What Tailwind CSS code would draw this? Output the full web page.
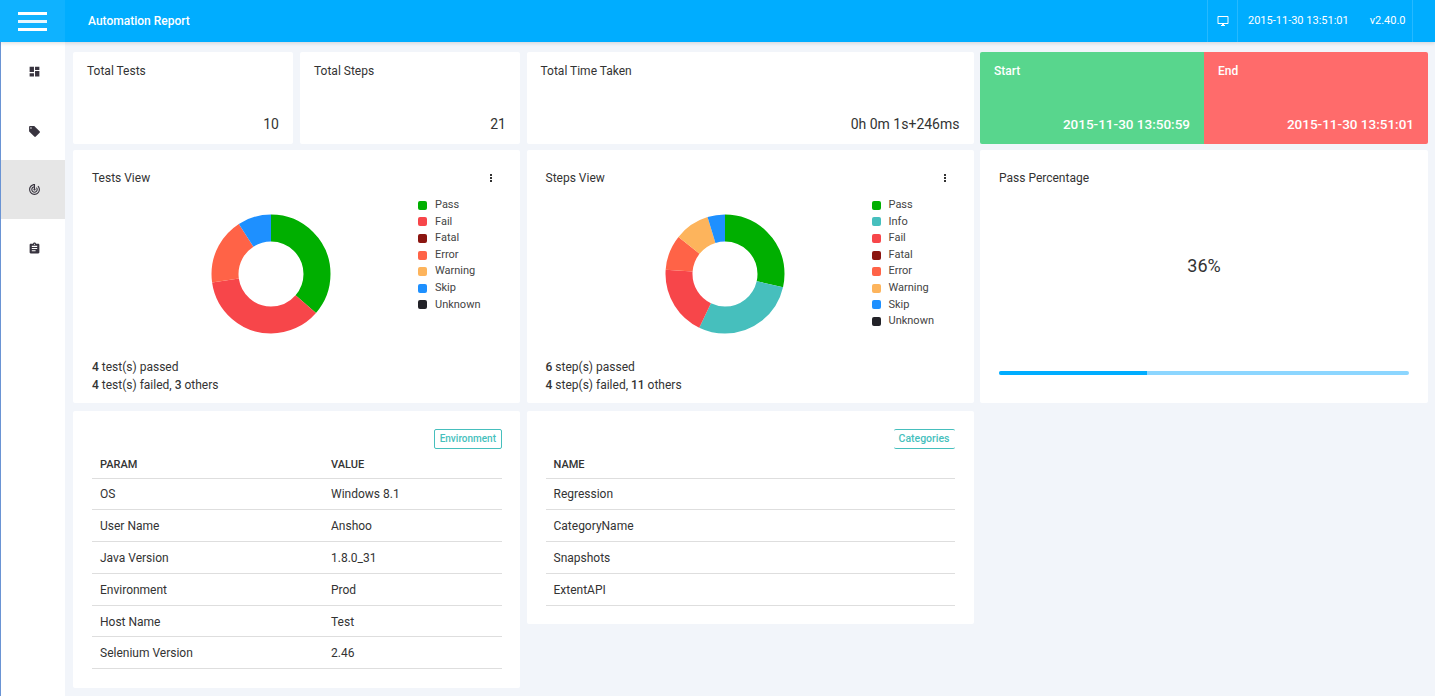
<!DOCTYPE html>
<html lang="en">
<head>
<meta charset="utf-8">
<title>Automation Report</title>
<script src="https://cdn.jsdelivr.net/npm/@tailwindcss/browser@4"></script>
</head>
<body class="h-[696px] overflow-hidden bg-[#f2f5fa] font-['Roboto',sans-serif] text-xs text-[#333]">
<header class="relative z-10 flex h-[42px] items-center bg-[#00adff] text-white shadow-[0_1px_4px_rgba(0,0,0,0.15)]">
  <div class="flex h-full w-[65px] flex-col items-center justify-center gap-[5px] bg-[#0fb2ff]">
    <span class="h-[3px] w-[29px] bg-white"></span>
    <span class="h-[3px] w-[29px] bg-white/90"></span>
    <span class="h-[3px] w-[29px] bg-white"></span>
  </div>
  <div class="ml-[23px] font-medium">Automation Report</div>
  <div class="ml-auto mr-[22px] flex h-full items-center">
    <div class="flex h-full w-[30px] items-center justify-center border-l border-white/15">
      <svg class="h-3 w-3 fill-white" viewBox="0 0 24 24"><path d="M21 2H3c-1.1 0-2 .9-2 2v12c0 1.1.9 2 2 2h7v2H8v2h8v-2h-2v-2h7c1.1 0 2-.9 2-2V4c0-1.1-.9-2-2-2zm0 14H3V4h18v12z"/></svg>
    </div>
    <div class="flex h-full w-[176px] items-center gap-[21px] border-x border-white/15 pl-[10px] text-[11px]">
      <span>2015-11-30 13:51:01</span>
      <span>v2.40.0</span>
    </div>
  </div>
</header>
<div class="flex h-[654px]">
  <nav class="h-full w-[65px] shrink-0 border-l border-[#6a94d4] bg-white">
    <div class="flex h-[59px] items-center justify-center pl-[3px]">
      <svg class="h-[13px] w-[13px] fill-[#38343f]" viewBox="0 0 24 24"><path d="M3 13h8V3H3v10zm0 8h8v-6H3v6zm10 0h8V11h-8v10zm0-18v6h8V3h-8z"/></svg>
    </div>
    <div class="flex h-[59px] items-center justify-center pl-[3px] pt-[1px]">
      <svg class="h-[13px] w-[13px] fill-[#38343f]" viewBox="0 0 24 24"><path d="M21.41 11.58l-9-9C12.05 2.22 11.55 2 11 2H4c-1.1 0-2 .9-2 2v7c0 .55.22 1.05.59 1.42l9 9c.36.36.86.58 1.41.58.55 0 1.05-.22 1.41-.59l7-7c.37-.36.59-.86.59-1.41 0-.55-.23-1.06-.59-1.42zM5.5 7C4.67 7 4 6.33 4 5.5S4.67 4 5.5 4 7 4.67 7 5.5 6.33 7 5.5 7z"/></svg>
    </div>
    <div class="flex h-[59px] items-center justify-center bg-[#e6e6e6] pl-[3px]">
      <svg class="h-[13px] w-[13px] fill-[#38343f]" viewBox="0 0 24 24"><path d="M19.07 4.93l-1.41 1.41C19.1 7.79 20 9.79 20 12c0 4.42-3.58 8-8 8s-8-3.58-8-8c0-4.08 3.05-7.44 7-7.93v2.02C8.16 6.57 6 9.03 6 12c0 3.31 2.69 6 6 6s6-2.69 6-6c0-1.66-.67-3.16-1.76-4.24l-1.41 1.41C15.55 9.9 16 10.9 16 12c0 2.21-1.79 4-4 4s-4-1.79-4-4c0-1.86 1.28-3.41 3-3.86v2.14c-.6.35-1 .98-1 1.72 0 1.1.9 2 2 2s2-.9 2-2c0-.74-.4-1.38-1-1.72V2h-1C6.48 2 2 6.48 2 12s4.48 10 10 10 10-4.48 10-10c0-2.76-1.12-5.26-2.93-7.07z"/></svg>
    </div>
    <div class="flex h-[59px] items-center justify-center pl-[3px]">
      <svg class="h-[13px] w-[13px] fill-[#38343f]" viewBox="0 0 24 24"><path d="M19 3h-4.18C14.4 1.84 13.3 1 12 1c-1.3 0-2.4.84-2.82 2H5c-1.1 0-2 .9-2 2v14c0 1.1.9 2 2 2h14c1.1 0 2-.9 2-2V5c0-1.1-.9-2-2-2zm-7 0c.55 0 1 .45 1 1s-.45 1-1 1-1-.45-1-1 .45-1 1-1zm2 14H7v-2h7v2zm3-4H7v-2h10v2zm0-4H7V7h10v2z"/></svg>
    </div>
  </nav>
  <main class="grid flex-1 grid-cols-[447px_447px_448px] content-start gap-x-[6.5px] pl-2 pr-[7px] pt-[10px]">
    <!-- row 1 -->
    <div class="mb-1.5 grid h-[92px] grid-cols-2 gap-[7px]">
      <div class="flex flex-col justify-between rounded-[2px] bg-white pb-[12px] pl-[14px] pr-[14px] pt-[11px]">
        <div class="leading-4">Total Tests</div>
        <div class="text-right text-sm leading-4">10</div>
      </div>
      <div class="flex flex-col justify-between rounded-[2px] bg-white pb-[12px] pl-[14px] pr-[14px] pt-[11px]">
        <div class="leading-4">Total Steps</div>
        <div class="text-right text-sm leading-4">21</div>
      </div>
    </div>
    <div class="mb-1.5 flex h-[92px] flex-col justify-between rounded-[2px] bg-white pb-[12px] pl-[14px] pr-[14px] pt-[11px]">
      <div class="leading-4">Total Time Taken</div>
      <div class="text-right text-sm leading-4">0h 0m 1s+246ms</div>
    </div>
    <div class="mb-1.5 flex h-[92px] overflow-hidden rounded-[2px] text-white">
      <div class="flex flex-1 flex-col justify-between bg-[#58d68d] pb-[12px] pl-[14px] pr-[14px] pt-[11px]">
        <div class="font-medium leading-4">Start</div>
        <div class="text-right text-[13.5px] font-medium leading-4">2015-11-30 13:50:59</div>
      </div>
      <div class="flex flex-1 flex-col justify-between bg-[#ff6b6b] pb-[12px] pl-[14px] pr-[14px] pt-[11px]">
        <div class="font-medium leading-4">End</div>
        <div class="text-right text-[13.5px] font-medium leading-4">2015-11-30 13:51:01</div>
      </div>
    </div>
    <!-- row 2 -->
    <section class="mb-2 h-[253px] rounded-[2px] bg-white pl-[19px] pr-[28px] pt-5">
      <div class="flex h-4 items-center justify-between">
        <span class="leading-4">Tests View</span>
        <span class="flex flex-col gap-[1px]"><i class="h-[2px] w-[2px] bg-[#333]"></i><i class="h-[2px] w-[2px] bg-[#333]"></i><i class="h-[2px] w-[2px] bg-[#333]"></i></span>
      </div>
      <div class="mt-[10px] flex h-[162px] items-start">
        <svg class="ml-[119px] mt-[18px] h-[120px] w-[120px] -rotate-90" viewBox="0 0 120 120" fill="none" stroke-width="27">
          <circle cx="60" cy="60" r="46" pathLength="11" stroke="#00af00" stroke-dasharray="4 7" stroke-dashoffset="0"/>
          <circle cx="60" cy="60" r="46" pathLength="11" stroke="#f7464a" stroke-dasharray="4 7" stroke-dashoffset="-4"/>
          <circle cx="60" cy="60" r="46" pathLength="11" stroke="#ff6347" stroke-dasharray="2 9" stroke-dashoffset="-8"/>
          <circle cx="60" cy="60" r="46" pathLength="11" stroke="#1e90ff" stroke-dasharray="1 10" stroke-dashoffset="-10"/>
        </svg>
        <ul class="ml-[87px] mt-[1px] text-[11px] leading-[16.6px] text-[#444]">
          <li class="flex items-center gap-[8px]"><i class="h-[9px] w-[9px] rounded-[2px] bg-[#00af00]"></i>Pass</li>
          <li class="flex items-center gap-[8px]"><i class="h-[9px] w-[9px] rounded-[2px] bg-[#f7464a]"></i>Fail</li>
          <li class="flex items-center gap-[8px]"><i class="h-[9px] w-[9px] rounded-[2px] bg-[#8b1510]"></i>Fatal</li>
          <li class="flex items-center gap-[8px]"><i class="h-[9px] w-[9px] rounded-[2px] bg-[#ff6347]"></i>Error</li>
          <li class="flex items-center gap-[8px]"><i class="h-[9px] w-[9px] rounded-[2px] bg-[#fdb45c]"></i>Warning</li>
          <li class="flex items-center gap-[8px]"><i class="h-[9px] w-[9px] rounded-[2px] bg-[#1e90ff]"></i>Skip</li>
          <li class="flex items-center gap-[8px]"><i class="h-[9px] w-[9px] rounded-[2px] bg-[#222228]"></i>Unknown</li>
        </ul>
      </div>
      <div class="leading-[18px]"><span class="font-medium">4</span> test(s) passed<br><span class="font-medium">4</span> test(s) failed, <span class="font-medium">3</span> others</div>
    </section>
    <section class="mb-2 h-[253px] rounded-[2px] bg-white pl-[19px] pr-[28px] pt-5">
      <div class="flex h-4 items-center justify-between">
        <span class="leading-4">Steps View</span>
        <span class="flex flex-col gap-[1px]"><i class="h-[2px] w-[2px] bg-[#333]"></i><i class="h-[2px] w-[2px] bg-[#333]"></i><i class="h-[2px] w-[2px] bg-[#333]"></i></span>
      </div>
      <div class="mt-[10px] flex h-[162px] items-start">
        <svg class="ml-[119px] mt-[18px] h-[120px] w-[120px] -rotate-90" viewBox="0 0 120 120" fill="none" stroke-width="27">
          <circle cx="60" cy="60" r="46" pathLength="21" stroke="#00af00" stroke-dasharray="6 15" stroke-dashoffset="0"/>
          <circle cx="60" cy="60" r="46" pathLength="21" stroke="#46bfbd" stroke-dasharray="6 15" stroke-dashoffset="-6"/>
          <circle cx="60" cy="60" r="46" pathLength="21" stroke="#f7464a" stroke-dasharray="4 17" stroke-dashoffset="-12"/>
          <circle cx="60" cy="60" r="46" pathLength="21" stroke="#ff6347" stroke-dasharray="2 19" stroke-dashoffset="-16"/>
          <circle cx="60" cy="60" r="46" pathLength="21" stroke="#fdb45c" stroke-dasharray="2 19" stroke-dashoffset="-18"/>
          <circle cx="60" cy="60" r="46" pathLength="21" stroke="#1e90ff" stroke-dasharray="1 20" stroke-dashoffset="-20"/>
        </svg>
        <ul class="ml-[87px] mt-[1px] text-[11px] leading-[16.6px] text-[#444]">
          <li class="flex items-center gap-[8px]"><i class="h-[9px] w-[9px] rounded-[2px] bg-[#00af00]"></i>Pass</li>
          <li class="flex items-center gap-[8px]"><i class="h-[9px] w-[9px] rounded-[2px] bg-[#46bfbd]"></i>Info</li>
          <li class="flex items-center gap-[8px]"><i class="h-[9px] w-[9px] rounded-[2px] bg-[#f7464a]"></i>Fail</li>
          <li class="flex items-center gap-[8px]"><i class="h-[9px] w-[9px] rounded-[2px] bg-[#8b1510]"></i>Fatal</li>
          <li class="flex items-center gap-[8px]"><i class="h-[9px] w-[9px] rounded-[2px] bg-[#ff6347]"></i>Error</li>
          <li class="flex items-center gap-[8px]"><i class="h-[9px] w-[9px] rounded-[2px] bg-[#fdb45c]"></i>Warning</li>
          <li class="flex items-center gap-[8px]"><i class="h-[9px] w-[9px] rounded-[2px] bg-[#1e90ff]"></i>Skip</li>
          <li class="flex items-center gap-[8px]"><i class="h-[9px] w-[9px] rounded-[2px] bg-[#222228]"></i>Unknown</li>
        </ul>
      </div>
      <div class="leading-[18px]"><span class="font-medium">6</span> step(s) passed<br><span class="font-medium">4</span> step(s) failed, <span class="font-medium">11</span> others</div>
    </section>
    <section class="mb-2 flex h-[253px] flex-col rounded-[2px] bg-white px-[19px] pt-5">
      <div class="leading-4">Pass Percentage</div>
      <div class="mt-[70px] text-center text-lg leading-[20px]">36%</div>
      <div class="mt-[95px] flex h-1 overflow-hidden rounded-[2px] bg-[#8cd6ff]">
        <div class="h-full w-[36%] bg-[#00adff]"></div>
      </div>
    </section>
    <!-- row 3 -->
    <section class="h-[277px] rounded-[2px] bg-white pl-[19px] pr-[18px] pt-[18px]">
      <div class="flex justify-end">
        <span class="flex h-5 items-center rounded-[2px] border border-[#46bfbd] px-[5px] text-[10px] font-medium text-[#46bfbd]">Environment</span>
      </div>
      <table class="w-full table-fixed border-collapse">
        <thead>
          <tr class="h-[29px] border-b border-[#dedede] text-left text-[11px]">
            <th class="w-[239px] pl-2 pt-[4px] font-medium">PARAM</th><th class="pt-[4px] font-medium">VALUE</th>
          </tr>
        </thead>
        <tbody>
          <tr class="h-[31.8px] border-b border-[#dedede]"><td class="pl-2 pt-[1px]">OS</td><td class="pt-[1px]">Windows 8.1</td></tr>
          <tr class="h-[31.8px] border-b border-[#dedede]"><td class="pl-2 pt-[1px]">User Name</td><td class="pt-[1px]">Anshoo</td></tr>
          <tr class="h-[31.8px] border-b border-[#dedede]"><td class="pl-2 pt-[1px]">Java Version</td><td class="pt-[1px]">1.8.0_31</td></tr>
          <tr class="h-[31.8px] border-b border-[#dedede]"><td class="pl-2 pt-[1px]">Environment</td><td class="pt-[1px]">Prod</td></tr>
          <tr class="h-[31.8px] border-b border-[#dedede]"><td class="pl-2 pt-[1px]">Host Name</td><td class="pt-[1px]">Test</td></tr>
          <tr class="h-[31.8px] border-b border-[#dedede]"><td class="pl-2 pt-[1px]">Selenium Version</td><td class="pt-[1px]">2.46</td></tr>
        </tbody>
      </table>
    </section>
    <section class="h-[213px] rounded-[2px] bg-white px-[19px] pt-[18px]">
      <div class="flex justify-end">
        <span class="flex h-5 items-center rounded-[2px] border-y border-[#46bfbd] px-[5px] text-[10.5px] font-medium text-[#46bfbd]">Categories</span>
      </div>
      <table class="w-full border-collapse">
        <thead>
          <tr class="h-[29px] border-b border-[#dedede] text-left text-[11px]">
            <th class="pl-2 pt-[4px] font-medium">NAME</th>
          </tr>
        </thead>
        <tbody>
          <tr class="h-[31.8px] border-b border-[#dedede]"><td class="pl-2 pt-[1px]">Regression</td></tr>
          <tr class="h-[31.8px] border-b border-[#dedede]"><td class="pl-2 pt-[1px]">CategoryName</td></tr>
          <tr class="h-[31.8px] border-b border-[#dedede]"><td class="pl-2 pt-[1px]">Snapshots</td></tr>
          <tr class="h-[31.8px] border-b border-[#dedede]"><td class="pl-2 pt-[1px]">ExtentAPI</td></tr>
        </tbody>
      </table>
    </section>
  </main>
</div>
</body>
</html>
